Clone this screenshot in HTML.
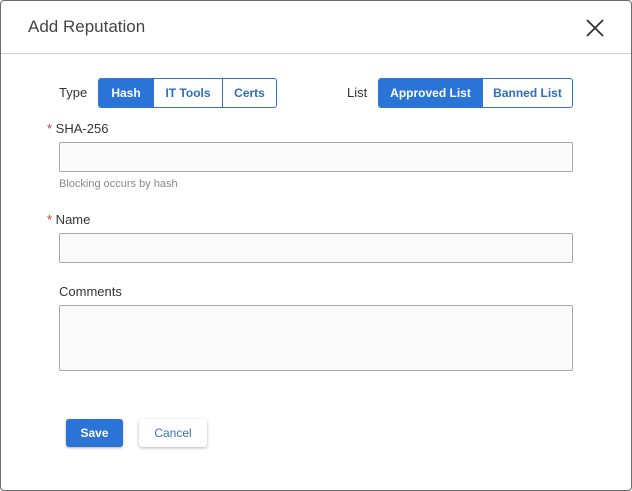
<!DOCTYPE html><html><head><style>
*{box-sizing:border-box}body{margin:0;width:632px;height:491px;background:#fff;font-family:"Liberation Sans",sans-serif;position:relative;overflow:hidden}
.frame{position:absolute;left:0;top:0;width:632px;height:491px;border:1px solid #6b6b6b;border-radius:4px}
.a{position:absolute}
.hdr{left:1px;top:53px;width:630px;height:1px;background:#cfcfcf}
.g{display:flex;border:1px solid #2d74d5;border-radius:3px;overflow:hidden;height:30px}
.g div{font-size:12px;font-weight:bold;color:#2d6cc4;display:flex;align-items:center;justify-content:center;border-left:1px solid #2d74d5}
.g div:first-child{border-left:none}
.g .on{background:#2a74d8;color:#fff}
.lbl{font-size:13px;color:#333}
.in{border:1px solid #a9a9a9;border-radius:2px;background:#fafafa}
.req{color:#c0392b}
</style></head><body><div class="frame"></div>
<div class="a" style="left:28px;top:17px;font-size:17px;color:#444">Add Reputation</div>
<svg class="a" style="left:585px;top:18px" width="20" height="20"><path d="M2 2L18 18M18 2L2 18" stroke="#333" stroke-width="1.8"/></svg>
<div class="a hdr"></div>
<div class="a lbl" style="left:59px;top:85px">Type</div>
<div class="a g" style="left:98px;top:78px;width:179px"><div class="on" style="width:54px">Hash</div><div style="width:69px">IT Tools</div><div style="width:54px">Certs</div></div>
<div class="a lbl" style="left:347px;top:85px">List</div>
<div class="a g" style="left:378px;top:78px;width:195px"><div class="on" style="width:103px">Approved List</div><div style="width:90px">Banned List</div></div>
<div class="a lbl" style="left:47px;top:121px"><span class="req">*</span> SHA-256</div>
<div class="a in" style="left:59px;top:142px;width:514px;height:30px"></div>
<div class="a" style="left:59px;top:178px;font-size:11px;color:#888">Blocking occurs by hash</div>
<div class="a lbl" style="left:47px;top:212px"><span class="req">*</span> Name</div>
<div class="a in" style="left:59px;top:233px;width:514px;height:30px"></div>
<div class="a lbl" style="left:59px;top:284px">Comments</div>
<div class="a in" style="left:59px;top:305px;width:514px;height:66px"></div>
<div class="a" style="left:66px;top:419px;width:57px;height:28px;background:#2a74d8;border-radius:3px;color:#fff;font-weight:bold;font-size:12px;display:flex;align-items:center;justify-content:center;box-shadow:0 1px 2px rgba(0,0,0,.3)">Save</div>
<div class="a" style="left:139px;top:419px;width:68px;height:28px;background:#fff;border-radius:3px;color:#3b6fc0;font-size:12px;display:flex;align-items:center;justify-content:center;box-shadow:0 1px 3px rgba(0,0,0,.3)">Cancel</div>
</body></html>
